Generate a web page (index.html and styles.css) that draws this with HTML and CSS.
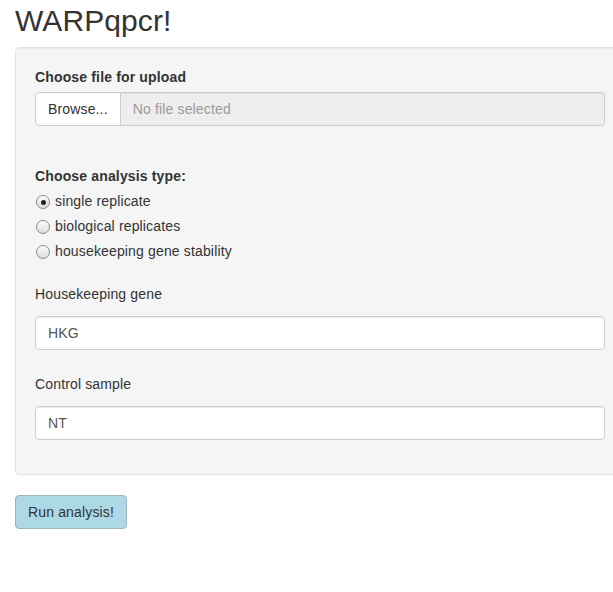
FILE: index.html
```
<!DOCTYPE html>
<html>
<head>
<meta charset="utf-8">
<link rel="stylesheet" href="styles.css">
</head>
<body>
<div class="container">
  <h2 class="title">WARPqpcr!</h2>
  <div class="well">
    <div class="form-group file-group">
      <label class="control-label bold">Choose file for upload</label>
      <div class="input-group">
        <span class="btn-browse">Browse...</span>
        <span class="file-name">No file selected</span>
      </div>
    </div>
    <div class="form-group radio-group">
      <label class="control-label bold">Choose analysis type:</label>
      <div class="radios">
        <label class="radio"><span class="dot checked"></span><span>single replicate</span></label>
        <label class="radio"><span class="dot"></span><span>biological replicates</span></label>
        <label class="radio"><span class="dot"></span><span>housekeeping gene stability</span></label>
      </div>
    </div>
    <div class="form-group text-group">
      <label class="control-label">Housekeeping gene</label>
      <div class="text-input">HKG</div>
    </div>
    <div class="form-group text-group">
      <label class="control-label">Control sample</label>
      <div class="text-input">NT</div>
    </div>
  </div>
  <button class="btn-run">Run analysis!</button>
</div>
</body>
</html>
```
FILE: styles.css
```
html, body {
  margin: 0;
  padding: 0;
  overflow: hidden;
  background: #fff;
}
body {
  font-family: "Liberation Sans", Arial, sans-serif;
  font-size: 14px;
  line-height: 20px;
  color: #333;
}
.container {
  padding: 0 15px;
  width: 640px;
  box-sizing: border-box;
}
.title {
  font-size: 30px;
  font-weight: 500;
  line-height: 33px;
  margin: 4px 0 10px 0;
  letter-spacing: 0.1px;
}
.well {
  width: 610px;
  box-sizing: border-box;
  background: #f5f5f5;
  border: 1px solid #e3e3e3;
  border-radius: 4px;
  box-shadow: inset 0 1px 1px rgba(0,0,0,.05);
  padding: 19px;
  margin-bottom: 20px;
  letter-spacing: 0.15px;
}
.form-group {
  margin-bottom: 15px;
}
.control-label {
  display: block;
  margin-bottom: 5px;
  font-weight: normal;
}
.bold {
  font-weight: bold;
}
.file-group {
  margin-bottom: 40px;
}
.input-group {
  display: flex;
  height: 34px;
  box-sizing: border-box;
}
.btn-browse {
  display: flex;
  align-items: center;
  padding: 0 12px;
  background: #fff;
  border: 1px solid #ccc;
  border-radius: 4px 0 0 4px;
  color: #333;
}
.file-name {
  flex: 1;
  display: flex;
  align-items: center;
  padding: 0 12px;
  background: #eee;
  border: 1px solid #ccc;
  border-left: none;
  border-radius: 0 4px 4px 0;
  color: #999;
  box-shadow: inset 0 1px 1px rgba(0,0,0,.075);
}
.radio-group {
  margin-bottom: 23px;
}
.radio-group .control-label {
  margin-bottom: 5px;
}
.radios {
  display: flex;
  flex-direction: column;
  gap: 5px;
}
.radio {
  display: flex;
  align-items: center;
  height: 20px;
  gap: 4px;
}
.dot {
  width: 14px;
  height: 14px;
  box-sizing: border-box;
  border-radius: 50%;
  border: 1px solid #8a8a8a;
  background: linear-gradient(#fdfdfd, #dcdcdc);
  position: relative;
  margin-left: 1px;
  margin-top: 2px;
  flex: none;
}
.dot.checked::after {
  content: "";
  position: absolute;
  left: 3.5px;
  top: 3.5px;
  width: 5px;
  height: 5px;
  border-radius: 50%;
  background: #222;
}
.radio span + span {
  margin-left: 1px;
}
.text-group .control-label {
  margin-bottom: 12px;
}
.text-group + .text-group {
  padding-top: 9px;
}
.text-input {
  height: 34px;
  box-sizing: border-box;
  background: #fff;
  border: 1px solid #ccc;
  border-radius: 4px;
  box-shadow: inset 0 1px 1px rgba(0,0,0,.075);
  padding: 6px 12px;
  color: #555;
}
.btn-run {
  font-family: "Liberation Sans", Arial, sans-serif;
  font-size: 14px;
  line-height: 20px;
  height: 34px;
  padding: 6px 12px;
  background: #add8e6;
  border: 1px solid #9fb4bd;
  border-radius: 4px;
  color: #333;
  margin: 0;
  letter-spacing: 0.15px;
}
```
